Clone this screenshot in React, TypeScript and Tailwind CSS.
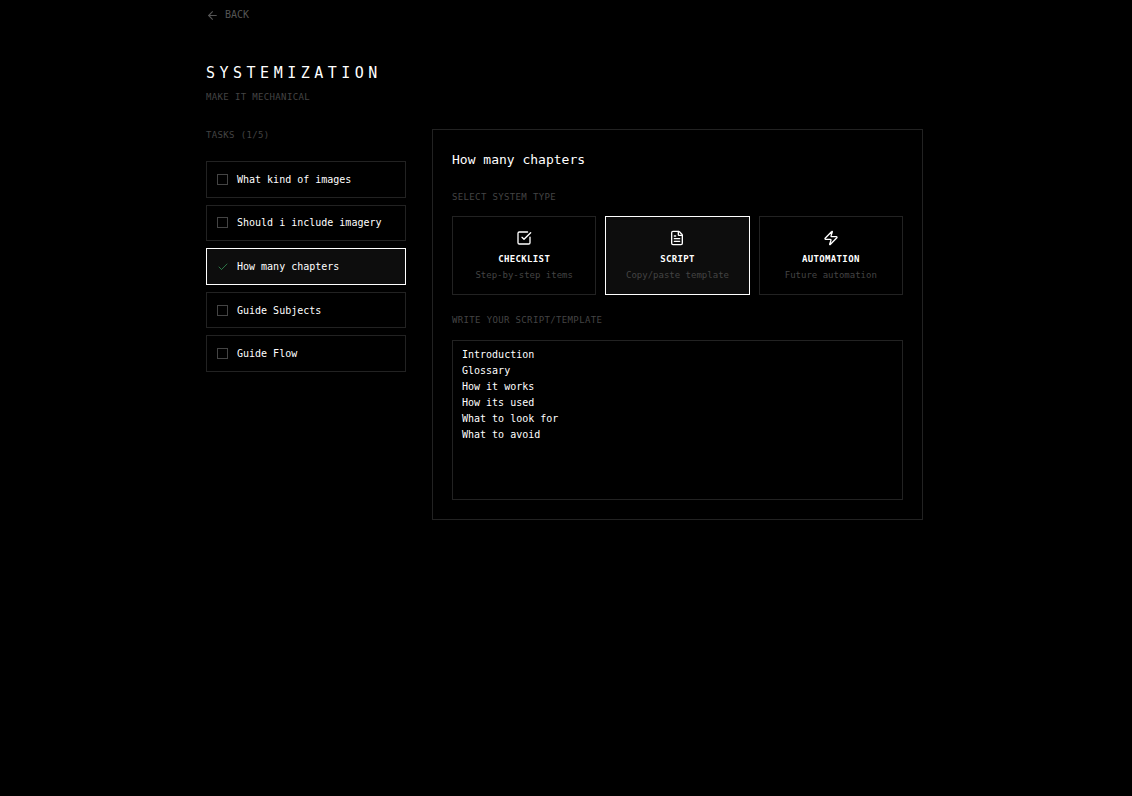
import { useState } from "react";
import { ArrowLeft, Check, FileText, SquareCheckBig, Zap, type LucideIcon } from "lucide-react";

type Task = { id: string; title: string; done: boolean };
type SystemType = { id: string; name: string; hint: string; Icon: LucideIcon };

const initialTasks: Task[] = [
  { id: "kind", title: "What kind of images", done: false },
  { id: "imagery", title: "Should i include imagery", done: false },
  { id: "chapters", title: "How many chapters", done: true },
  { id: "subjects", title: "Guide Subjects", done: false },
  { id: "flow", title: "Guide Flow", done: false },
];

const systemTypes: SystemType[] = [
  { id: "checklist", name: "CHECKLIST", hint: "Step-by-step items", Icon: SquareCheckBig },
  { id: "script", name: "SCRIPT", hint: "Copy/paste template", Icon: FileText },
  { id: "automation", name: "AUTOMATION", hint: "Future automation", Icon: Zap },
];

const initialScript = [
  "Introduction",
  "Glossary",
  "How it works",
  "How its used",
  "What to look for",
  "What to avoid",
].join("\n");

const captionClass = "text-[9px] leading-[12px] tracking-[0.04em] text-[#444444]";

function TaskRow({
  task,
  selected,
  onSelect,
  onToggle,
}: {
  task: Task;
  selected: boolean;
  onSelect: () => void;
  onToggle: () => void;
}) {
  return (
    <li
      className={`flex items-center border pl-[10px] ${
        selected ? "border-white bg-[#0d0d0d]" : "border-[#222222]"
      }`}
    >
      <span className="relative flex size-[11px] shrink-0">
        <input
          type="checkbox"
          aria-label={`${task.title} done`}
          checked={task.done}
          onChange={onToggle}
          className="size-[11px] appearance-none border border-[#444444] checked:border-transparent"
        />
        {task.done && (
          <Check
            className="pointer-events-none absolute inset-0 size-[12px] text-[#4ade80]"
            strokeWidth={1}
          />
        )}
      </span>
      <button
        type="button"
        onClick={onSelect}
        className="flex-1 self-stretch px-[9px] pt-px text-left text-[10px] leading-[16px]"
      >
        {task.title}
      </button>
    </li>
  );
}

export default function App() {
  const [tasks, setTasks] = useState(initialTasks);
  const [selectedId, setSelectedId] = useState("chapters");
  const [systemId, setSystemId] = useState("script");
  const [script, setScript] = useState(initialScript);

  const selected = tasks.find((task) => task.id === selectedId);
  const doneCount = tasks.filter((task) => task.done).length;

  const toggle = (id: string) =>
    setTasks(tasks.map((task) => (task.id === id ? { ...task, done: !task.done } : task)));

  return (
    <div className="min-h-screen bg-black font-['DejaVu_Sans_Mono',monospace] text-white">
      <div className="mx-auto max-w-[720px] pt-2 pr-[3px] pb-8">
        <button
          type="button"
          className="flex items-center gap-[6px] text-[10px] leading-[14px] text-[#555555]"
        >
          <ArrowLeft className="size-[13px]" />
          BACK
        </button>

        <header className="mt-10">
          <h1 className="text-[15px] leading-[22px] tracking-[0.3em]">SYSTEMIZATION</h1>
          <p className={`mt-[7px] ${captionClass}`}>MAKE IT MECHANICAL</p>
        </header>

        <main className="mt-[26px] grid grid-cols-1 items-start gap-[26px] sm:grid-cols-[200px_1fr]">
          <section>
            <h2 className={captionClass}>
              TASKS ({doneCount}/{tasks.length})
            </h2>
            <ul className="mt-5 grid min-h-[211px] gap-[7px]">
              {tasks.map((task) => (
                <TaskRow
                  key={task.id}
                  task={task}
                  selected={task.id === selectedId}
                  onSelect={() => setSelectedId(task.id)}
                  onToggle={() => toggle(task.id)}
                />
              ))}
            </ul>
          </section>

          <section className="border border-[#222222] p-[19px]">
            <h2 className="text-[13px] leading-[22px]">{selected?.title}</h2>

            <h3 className={`mt-5 ${captionClass}`}>SELECT SYSTEM TYPE</h3>
            <div className="mt-[13px] grid grid-cols-3 gap-[9px]">
              {systemTypes.map(({ id, name, hint, Icon }) => (
                <button
                  key={id}
                  type="button"
                  aria-pressed={id === systemId}
                  onClick={() => setSystemId(id)}
                  className={`flex flex-col items-center border px-2 pt-[13px] pb-3 text-[9px] ${
                    id === systemId ? "border-white bg-[#0d0d0d]" : "border-[#222222]"
                  }`}
                >
                  <Icon className="size-4" />
                  <span className="mt-[6px] leading-[14px] font-bold tracking-[0.04em]">
                    {name}
                  </span>
                  <span className="mt-[2px] leading-[14px] text-[#444444]">{hint}</span>
                </button>
              ))}
            </div>

            <label htmlFor="script" className={`mt-[19px] block ${captionClass}`}>
              WRITE YOUR SCRIPT/TEMPLATE
            </label>
            <textarea
              id="script"
              rows={9}
              value={script}
              onChange={(event) => setScript(event.target.value)}
              className="mt-[14px] block min-h-[160px] w-full resize-none border border-[#222222] bg-black px-[9px] py-[6px] text-[10px] leading-[16px] outline-none"
            />
          </section>
        </main>
      </div>
    </div>
  );
}
